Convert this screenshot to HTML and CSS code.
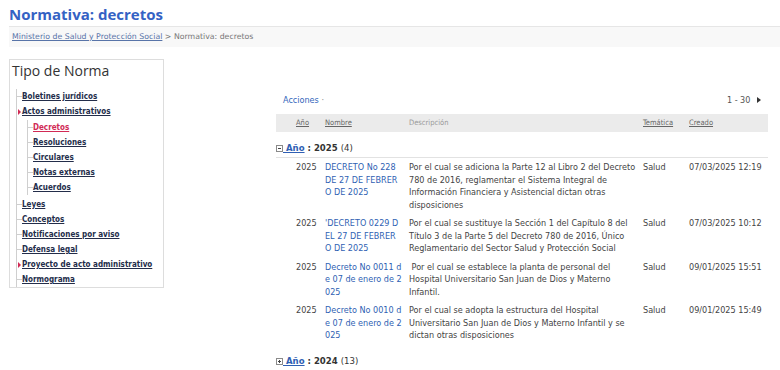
FILE: index.html
```html
<!DOCTYPE html>
<html lang="es">
<head>
    <meta charset="UTF-8">
    <meta name="viewport" content="width=device-width, initial-scale=1.0">
    <title>Normativa: decretos</title>
    <link rel="stylesheet" href="styles.css">
</head>
<body>
    <div class="top">
        <h1 class="page-title">Normativa: decretos</h1>
        <div class="breadcrumb"><a href="#">Ministerio de Salud y Protección Social</a> &gt; Normativa: decretos</div>
    </div>

    <div class="main">
        <aside class="sidebar">
            <h2>Tipo de Norma</h2>
            <ul class="tree">
                <li><a href="#">Boletines jurídicos</a></li>
                <li class="has-children"><a href="#">Actos administrativos</a>
                    <ul class="tree sub">
                        <li><a href="#" class="current">Decretos</a></li>
                        <li><a href="#">Resoluciones</a></li>
                        <li><a href="#">Circulares</a></li>
                        <li><a href="#">Notas externas</a></li>
                        <li><a href="#">Acuerdos</a></li>
                    </ul>
                </li>
                <li><a href="#">Leyes</a></li>
                <li><a href="#">Conceptos</a></li>
                <li><a href="#">Notificaciones por aviso</a></li>
                <li><a href="#">Defensa legal</a></li>
                <li class="has-children"><a href="#">Proyecto de acto administrativo</a></li>
                <li><a href="#">Normograma</a></li>
            </ul>
        </aside>

        <section class="listing">
            <div class="toolbar">
                <a href="#" class="actions">Acciones <span class="dot">·</span></a>
                <span class="paging">1 - 30
                    <svg width="5" height="6" viewBox="0 0 5 6"><path d="M0 0 L4 3 L0 6 Z" fill="#333"/></svg>
                </span>
            </div>

            <table class="docs">
                <colgroup>
                    <col class="c-icon">
                    <col class="c-year">
                    <col class="c-name">
                    <col class="c-desc">
                    <col class="c-topic">
                    <col class="c-date">
                </colgroup>
                <thead>
                    <tr>
                        <th></th>
                        <th class="year"><a href="#">Año</a></th>
                        <th><a href="#">Nombre</a></th>
                        <th class="plain">Descripción</th>
                        <th><a href="#">Temática</a></th>
                        <th><a href="#">Creado</a></th>
                    </tr>
                </thead>
                <tbody>
                    <tr class="group">
                        <td colspan="6">
                            <svg class="toggle" width="7" height="7" viewBox="0 0 7 7"><rect x="0.5" y="0.5" width="6" height="6" fill="#fff" stroke="#8a8a8a"/><path d="M2 3.5 H5" stroke="#444"/></svg><a href="#">&nbsp;Año</a> : 2025 <span class="count">(4)</span>
                        </td>
                    </tr>
                    <tr>
                        <td></td>
                        <td class="year">2025</td>
                        <td class="name"><a href="#">DECRETO No 228 DE 27 DE FEBRERO DE 2025</a></td>
                        <td class="desc">Por el cual se adiciona la Parte 12 al Libro 2 del Decreto 780 de 2016, reglamentar el Sistema Integral de Información Financiera y Asistencial dictan otras disposiciones</td>
                        <td>Salud</td>
                        <td>07/03/2025 12:19</td>
                    </tr>
                    <tr>
                        <td></td>
                        <td class="year">2025</td>
                        <td class="name"><a href="#">'DECRETO 0229 DEL 27 DE FEBRERO DE 2025</a></td>
                        <td class="desc">Por el cual se sustituye la Sección 1 del Capítulo 8 del Título 3 de la Parte 5 del Decreto 780 de 2016, Único Reglamentario del Sector Salud y Protección Social</td>
                        <td>Salud</td>
                        <td>07/03/2025 10:12</td>
                    </tr>
                    <tr>
                        <td></td>
                        <td class="year">2025</td>
                        <td class="name"><a href="#">Decreto No 0011 de 07 de enero de 2025</a></td>
                        <td class="desc">&nbsp;Por el cual se establece la planta de personal del Hospital Universitario San Juan de Dios y Materno Infantil.</td>
                        <td>Salud</td>
                        <td>09/01/2025 15:51</td>
                    </tr>
                    <tr>
                        <td></td>
                        <td class="year">2025</td>
                        <td class="name"><a href="#">Decreto No 0010 de 07 de enero de 2025</a></td>
                        <td class="desc">Por el cual se adopta la estructura del Hospital Universitario San Juan de Dios y Materno Infantil y se dictan otras disposiciones</td>
                        <td>Salud</td>
                        <td>09/01/2025 15:49</td>
                    </tr>
                    <tr class="group closed">
                        <td colspan="6">
                            <svg class="toggle" width="7" height="7" viewBox="0 0 7 7"><rect x="0.5" y="0.5" width="6" height="6" fill="#fff" stroke="#8a8a8a"/><path d="M2 3.5 H5 M3.5 2 V5" stroke="#444"/></svg><a href="#">&nbsp;Año</a> : 2024 <span class="count">(13)</span>
                        </td>
                    </tr>
                </tbody>
            </table>
        </section>
    </div>
</body>
</html>
```

FILE: styles.css
```css
body {
    margin: 0;
    font-family: "DejaVu Sans Condensed", "DejaVu Sans", sans-serif;
    font-stretch: semi-condensed;
    color: #444;
    background: #fff;
}
a {
    color: inherit;
}

/* cabecera */
.top {
    margin-left: 9px;
}
.page-title {
    margin: 0;
    padding: 4px 0 2px;
    font-family: "Open Sans", sans-serif;
    font-stretch: normal;
    font-weight: 700;
    font-size: 15px;
    line-height: 20px;
    color: #3462c4;
    border-bottom: 1px solid #e6e6e6;
}
.breadcrumb {
    background: #f8f8f8;
    padding: 0 3px;
    line-height: 20px;
    font-family: "DejaVu Sans", sans-serif;
    font-stretch: normal;
    font-size: 7.8px;
    color: #777;
}
.breadcrumb a {
    color: #5874a8;
}

.main {
    display: flex;
    align-items: flex-start;
    margin: 12px 12px 0 9px;
}

/* menu lateral */
.sidebar {
    box-sizing: border-box;
    width: 155px;
    border: 1px solid #ddd;
    padding: 2px 2px 0;
}
.sidebar h2 {
    margin: 0;
    font-family: "Open Sans", sans-serif;
    font-stretch: normal;
    font-weight: 400;
    font-size: 14px;
    line-height: 18px;
    color: #333;
}
.tree {
    list-style: none;
    margin: 9px 0 0 4px;
    padding: 0;
    border-left: 1px solid #cfcfcf;
}
.tree li {
    font-size: 8px;
    font-weight: 700;
    line-height: 15px;
    white-space: nowrap;
}
.tree li::before {
    content: "";
    display: inline-block;
    width: 5px;
    vertical-align: middle;
    border-top: 1px solid #cfcfcf;
}
.tree li.has-children::before {
    width: 0;
    height: 0;
    margin: 0 1px 0 1px;
    border-top: 3px solid transparent;
    border-bottom: 3px solid transparent;
    border-left: 3px solid #d12a55;
}
.tree a {
    color: #232d4a;
}
.tree a.current {
    color: #d12a55;
}
.tree.sub {
    margin: 1px 0 2px 10px;
}

/* listado */
.listing {
    width: 492px;
    margin-left: 112px;
    padding-top: 33px;
}
.toolbar {
    display: flex;
    justify-content: space-between;
    align-items: center;
    height: 16px;
    padding: 0 6px 0 7px;
    font-size: 9px;
}
.actions {
    color: #3366bb;
    text-decoration: none;
}
.actions .dot {
    color: #888;
}
.paging {
    color: #555;
}
.paging svg {
    margin-left: 4px;
}

.docs {
    width: 492px;
    margin-top: 6px;
    table-layout: fixed;
    border-collapse: collapse;
    font-size: 9px;
    line-height: 12.5px;
}
.c-icon { width: 18px; }
.c-year { width: 30px; }
.c-name { width: 84px; }
.c-desc { width: 234px; }
.c-topic { width: 46px; }
.c-date { width: 80px; }

.docs th {
    height: 18px;
    padding: 0 2px 0 1px;
    background: #ebebeb;
    font-size: 7.5px;
    font-weight: 400;
    text-align: left;
    color: #666;
}
.docs th.plain {
    color: #9a9a9a;
}
.docs td {
    padding: 3px 5px 3px 1px;
    vertical-align: top;
}
.docs td.year,
.docs th.year {
    padding-left: 2px;
}
.docs td.name {
    padding-right: 6.25px;
    word-break: break-all;
}
.docs td.name a {
    color: #2f5fb3;
    text-decoration: none;
}
.docs td.desc {
    padding-right: 3px;
}

.docs tr.group td {
    padding: 8px 0 1px;
    font-size: 9.5px;
    font-weight: 700;
    line-height: 16px;
    color: #333;
    border-bottom: 1px solid #e2e2e2;
}
.docs tr.group.closed td {
    border-bottom: none;
}
.docs tr.group a {
    color: #2f5fb3;
}
.docs tr.group .count {
    font-weight: 400;
}
.toggle {
    vertical-align: -1px;
}
```
